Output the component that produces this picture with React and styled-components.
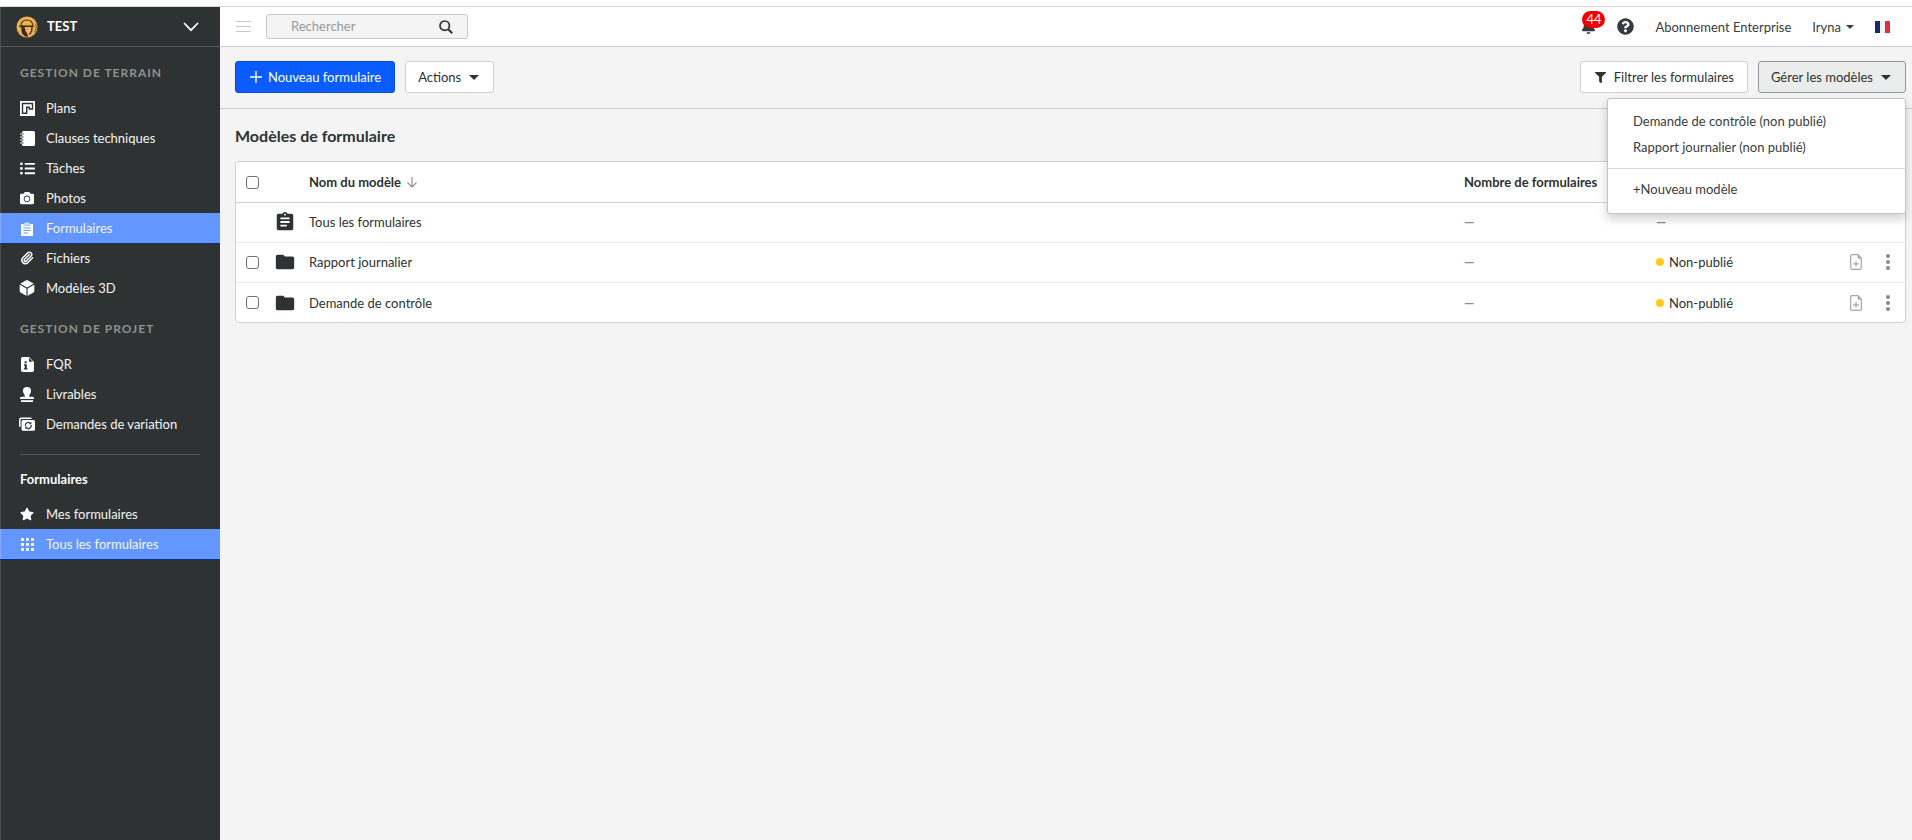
import React from "react";
import styled, { createGlobalStyle, css } from "styled-components";
import { FaCamera, FaListUl, FaStar, FaFilter, FaQuestionCircle, FaBell } from "react-icons/fa";
import { IoCube } from "react-icons/io5";
import { MdAssignment, MdFolder } from "react-icons/md";
import { Paperclip } from "lucide-react";

const GlobalStyle = createGlobalStyle`
  *, *::before, *::after { box-sizing: border-box; }
  body {
    margin: 0;
    background: #f4f4f4;
    color: #2e3232;
    font-family: Lato, "Open Sans", sans-serif;
    font-size: 13px;
    line-height: 20px;
  }
  button, input { font: inherit; color: inherit; }
  svg { display: block; flex: none; }
`;

const Page = styled.div`
  display: flex;
  flex-direction: column;
  min-height: 100vh;
`;

const TopStrip = styled.div`
  height: 7px;
  background: #fff;
  border-bottom: 1px solid #d6d6d6;
`;

const Shell = styled.div`
  display: flex;
  flex: 1;
`;

/* ---------- sidebar ---------- */

const Sidebar = styled.aside`
  flex: none;
  width: 220px;
  background: #2e3233;
  color: #fff;
  box-shadow: inset 1px 0 #4a4e4f;
`;

const ProjectButton = styled.button`
  display: flex;
  align-items: center;
  width: 100%;
  height: 40px;
  padding: 0 21px 0 16px;
  border: 0;
  border-bottom: 1px solid #565959;
  background: none;
  font-weight: 700;
  cursor: pointer;
`;

const ProjectName = styled.span`
  flex: 1;
  margin-left: 9px;
  padding-bottom: 2px;
  text-align: left;
`;

const SectionTitle = styled.h2`
  margin: 0;
  padding: 16px 20px 10px;
  font-size: 12px;
  font-weight: 700;
  letter-spacing: 1px;
  color: #8f9191;
  text-transform: uppercase;
`;

const GroupTitle = styled.h2`
  margin: 0;
  padding: 14px 20px 10px;
  font-size: 13px;
  font-weight: 700;
`;

const NavList = styled.ul`
  margin: 0;
  padding: 0;
  list-style: none;
`;

const NavLink = styled.a`
  display: flex;
  align-items: center;
  gap: 11px;
  height: 30px;
  padding: 0 19px;
  color: #f4f4f4;
  text-decoration: none;
  ${(p) =>
    p.$active &&
    css`
      background: #6496ff;
      box-shadow: inset 1px 0 #86adff, 0 1px #0b2f7c;
    `}
`;

const NavIcon = styled.span`
  display: flex;
  justify-content: center;
  width: 16px;
  color: #fff;
`;

const Divider = styled.hr`
  margin: 15px 20px 0;
  border: 0;
  border-top: 1px solid #565959;
`;

/* ---------- main column ---------- */

const Main = styled.div`
  display: flex;
  flex-direction: column;
  flex: 1;
  min-width: 0;
`;

const TopBar = styled.header`
  display: flex;
  align-items: center;
  justify-content: space-between;
  height: 40px;
  padding: 0 22px 0 16px;
  background: #fff;
  border-bottom: 1px solid #cdcdcd;
`;

const BarGroup = styled.div`
  display: flex;
  align-items: center;
  gap: ${(p) => p.$gap}px;
`;

const IconButton = styled.button`
  display: flex;
  align-items: center;
  justify-content: center;
  position: relative;
  padding: 0;
  border: 0;
  background: none;
  color: ${(p) => p.$color || "#343a42"};
  cursor: pointer;
`;

const SearchBox = styled.form`
  display: flex;
  align-items: center;
  width: 202px;
  height: 25px;
  padding: 0 14px 0 24px;
  border: 1px solid #c8c8c8;
  border-radius: 3px;
  background: #f4f4f4;
`;

const SearchInput = styled.input`
  flex: 1;
  min-width: 0;
  height: 20px;
  padding: 0 0 2px;
  border: 0;
  outline: 0;
  background: none;
  &::placeholder { color: #9a9a9a; opacity: 1; }
`;

const Badge = styled.span`
  position: absolute;
  top: -8px;
  left: 1px;
  min-width: 23px;
  border-radius: 9px;
  background: #f00000;
  color: #fff;
  font-size: 13px;
  line-height: 17px;
  text-align: center;
`;

const PlainLink = styled.a`
  color: #3a3d3d;
  text-decoration: none;
`;

const UserButton = styled.button`
  display: flex;
  align-items: center;
  gap: 5px;
  padding: 0;
  border: 0;
  background: none;
  color: #3a3d3d;
  cursor: pointer;
`;

const Toolbar = styled.div`
  display: flex;
  justify-content: space-between;
  padding: 14px 6px 15px 15px;
  border-bottom: 1px solid #cdcdd0;
`;

const variants = {
  primary: css`
    background: #0b5cff;
    border-color: #0a4bd0;
    color: #fff;
  `,
  plain: css`
    background: #fff;
    border-color: #cfcfcf;
  `,
  pressed: css`
    background: #ebedec;
    border-color: #92959a;
  `,
};

const Button = styled.button`
  display: flex;
  align-items: center;
  gap: ${(p) => p.$gap || 8}px;
  height: 32px;
  padding: ${(p) => (p.$menu ? "0 14px 0 12px" : "0 13px 0 14px")};
  border: 1px solid;
  border-radius: 3px;
  white-space: nowrap;
  cursor: pointer;
  ${(p) => variants[p.$variant || "plain"]}
`;

const MenuAnchor = styled.div`
  position: relative;
`;

const Menu = styled.div`
  position: absolute;
  z-index: 2;
  top: 37px;
  right: 0;
  width: 299px;
  padding: 9px 0 11px;
  border: 1px solid #c4c4c4;
  border-radius: 3px;
  background: #fff;
  box-shadow: 0 5px 10px rgba(0, 0, 0, 0.18);
`;

const MenuItem = styled.button`
  display: block;
  width: 100%;
  height: 26px;
  padding: 0 25px;
  border: 0;
  background: none;
  text-align: left;
  color: #3a3d3d;
  cursor: pointer;
`;

const MenuDivider = styled.hr`
  margin: 8px 0 7px;
  border: 0;
  border-top: 1px solid #d9d9d9;
`;

const Content = styled.main`
  padding: 15px 6px 0 15px;
`;

const Title = styled.h1`
  margin: 0 0 13px;
  font-size: 16px;
  line-height: 24px;
  font-weight: 700;
`;

const TableCard = styled.div`
  border: 1px solid #cfcfcf;
  border-radius: 4px;
  background: #fff;
  overflow: hidden;
`;

const Table = styled.table`
  width: 100%;
  border-collapse: separate;
  border-spacing: 0;
  table-layout: fixed;
`;

const Col = styled.col`
  width: ${(p) => (p.$w ? `${p.$w}px` : "auto")};
`;

const Th = styled.th`
  height: 41px;
  padding: 0;
  border-bottom: 1px solid #cfcfcf;
  text-align: left;
  font-weight: 700;
  white-space: nowrap;
`;

const Td = styled.td`
  height: 40px;
  padding: 0 0 1px;
  border-bottom: 1px solid #e9e9e9;
  white-space: nowrap;
  tr:last-child > & { height: 39px; padding: 0; border-bottom: 0; }
`;

const Inline = styled.span`
  display: flex;
  align-items: center;
  gap: ${(p) => p.$gap}px;
`;

const Checkbox = styled.input`
  display: block;
  appearance: none;
  width: 13px;
  height: 13px;
  margin: 0 0 0 10px;
  border: 1px solid #6f7171;
  border-radius: 3px;
  background: #fff;
  &:checked { background: #0b5cff; }
`;

const Dash = styled.span`
  color: #8c8e8e;
  font-weight: 700;
`;

const Dot = styled.span`
  width: 8px;
  height: 8px;
  border-radius: 50%;
  background: #fc1;
`;

/* ---------- icons ---------- */

const LogoIcon = () => (
  <svg width="22" height="22" viewBox="0 0 22 22">
    <circle cx="11" cy="11" r="10.5" fill="#eab253" />
    <path d="M5 9.500C5.200 6 7.800 4 11 4s5.600 2.200 5.800 5.500" fill="none" stroke="#4a3414" strokeWidth="1.200" />
    <path d="M2.500 10.300c1.500-1 3-1 4.800-.9h10.500v1.500H9L6.500 12z" fill="#3b2a12" />
    <path d="M9 11h6.300v3.300l-2 3.700-2.800-1.300z" fill="#edb873" />
    <path d="M5.300 11.300h3.400l.6 3.600 2 2.600.6 3.400c-3.200-.3-5.400-1.900-6.300-4.600z" fill="#3b2a12" />
    <path d="M15.800 11c.6 3-.4 5.500-2.600 7.500" fill="none" stroke="#3b2a12" strokeWidth="1.400" />
    <path d="M9.600 13.800l1.800-.8" stroke="#c8524a" strokeWidth="1" />
    <path d="M19.600 7.500c1.100 3.300.6 6.500-1.300 9" fill="none" stroke="#5a4018" strokeWidth=".8" />
  </svg>
);

const ChevronDown = () => (
  <svg width="16" height="10" viewBox="0 0 16 10" fill="none" stroke="#fff" strokeWidth="1.700">
    <path d="M1 1l7 7.200L15 1" />
  </svg>
);

const PlansIcon = () => (
  <svg width="15" height="15" viewBox="0 0 15 15" fill="none" stroke="#2e3233">
    <rect width="15" height="15" fill="#fff" stroke="none" />
    <path d="M2.500 13V2.500h10v5.500H9.800" strokeWidth="1.400" />
    <path d="M2.500 12.300h4.200V6.200h2.600v2.600" strokeWidth="1.400" />
  </svg>
);

const NotebookIcon = () => (
  <svg width="15" height="15" viewBox="0 0 15 15">
    <path d="M3.500 0h10A1.500 1.500 0 0 1 15 1.500v12a1.500 1.500 0 0 1-1.500 1.500h-10A1.500 1.500 0 0 1 2 13.500v-12A1.500 1.500 0 0 1 3.500 0z" fill="#fff" />
    <path d="M0 3h3.500M0 6h3.500M0 9h3.500M0 12h3.500" stroke="#2e3233" strokeWidth="2" />
    <path d="M.5 3h3.200M.5 6h3.200M.5 9h3.200M.5 12h3.200" stroke="#fff" strokeWidth="1.100" strokeLinecap="round" />
  </svg>
);

const ClipboardIcon = () => (
  <svg width="12" height="15" viewBox="0 0 12 15">
    <path d="M0 3h2.600v1.600h6.800V3H12v12H0z" fill="#fff" />
    <path d="M3 3.800V2.200h1.500a1.600 1.600 0 0 1 3 0H9v1.600z" fill="#dbe7ff" />
    <path d="M2.500 7h7M2.500 9.500h7M2.500 12h4.500" stroke="#6496ff" strokeWidth="1.100" />
  </svg>
);

const InfoFileIcon = () => (
  <svg width="13" height="15" viewBox="0 0 13 15">
    <path d="M1.800 0H8l5 5v8.200A1.800 1.800 0 0 1 11.200 15H1.800A1.800 1.800 0 0 1 0 13.200V1.800A1.800 1.800 0 0 1 1.800 0z" fill="#fff" />
    <path d="M8 1v3.800h3.800z" fill="#2e3233" />
    <path d="M3.600 4.200h2v2h-2zM3 7.300h2.800v4h.8v1.300H2.900v-1.300h.8V8.600H3z" fill="#2e3233" />
  </svg>
);

const StampIcon = () => (
  <svg width="14" height="15" viewBox="0 0 14 15" fill="#fff">
    <path d="M7 0a4.100 4.100 0 0 0-4.100 4.100c0 2.200 2 3.400 2 5.600H1.500A1.500 1.500 0 0 0 0 11.200V12h14v-.8a1.500 1.500 0 0 0-1.500-1.500H9.100c0-2.200 2-3.400 2-5.600A4.100 4.100 0 0 0 7 0z" />
    <path d="M1 13.200h12V15H1z" />
  </svg>
);

const VariationIcon = () => (
  <svg width="16" height="14" viewBox="0 0 16 14">
    <path d="M12.500 1.200H2.200A1.400 1.400 0 0 0 .8 2.600v7.200" fill="none" stroke="#fff" strokeWidth="1.500" />
    <rect x="2.500" y="3" width="13.500" height="10.700" rx="1.500" fill="#fff" />
    <path d="M6.300 8.700a3 3 0 0 1 5-2.500M12.300 8a3 3 0 0 1-5 2.700" fill="none" stroke="#2e3233" strokeWidth="1.200" />
    <path d="M12.400 4.800v2.400H10zM6.200 12V9.600h2.400z" fill="#2e3233" />
  </svg>
);

const GridIcon = () => (
  <svg width="13" height="13" viewBox="0 0 13 13" fill="#fff">
    {[0, 5, 10].map((y) => [0, 5, 10].map((x) => <rect key={`${x}-${y}`} x={x} y={y} width="3" height="3" rx=".8" />))}
  </svg>
);

const HamburgerIcon = () => (
  <svg width="15" height="12" viewBox="0 0 15 12" stroke="#c9c9c9">
    <path d="M0 .5h15M0 5.500h15M0 10.500h15" />
  </svg>
);

const SearchIcon = () => (
  <svg width="14" height="14" viewBox="0 0 14 14" fill="none" stroke="#2e3232" strokeWidth="1.700">
    <circle cx="5.700" cy="5.700" r="4.700" />
    <path d="M9.200 9.200l4 4" strokeWidth="2" />
  </svg>
);

const PlusIcon = () => (
  <svg width="12" height="12" viewBox="0 0 12 12" stroke="#fff" strokeWidth="1.400">
    <path d="M6 0v12M0 6h12" />
  </svg>
);

const Caret = ({ width = 10, height = 5 }) => (
  <svg width={width} height={height} viewBox="0 0 10 5" fill="currentColor" preserveAspectRatio="none">
    <path d="M0 0h10L5 5z" />
  </svg>
);

const FlagIcon = () => (
  <svg width="15" height="12" viewBox="0 0 15 12">
    <rect width="5" height="12" fill="#15296b" />
    <rect x="5" width="5" height="12" fill="#f2f2f4" />
    <rect x="10" width="5" height="12" fill="#d8323c" />
  </svg>
);

const ArrowDown = () => (
  <svg width="10" height="11" viewBox="0 0 10 11" fill="none" stroke="#8f9292" strokeWidth="1.200">
    <path d="M5 0v10M.5 5.500L5 10l4.500-4.500" />
  </svg>
);

const AddFileIcon = () => (
  <svg width="12" height="16" viewBox="0 0 12 16" fill="none" stroke="#a3a5a5" strokeWidth="1.200">
    <path d="M2 .7h6l3.300 3.500v9.700A1.300 1.300 0 0 1 10 15.300H2A1.300 1.300 0 0 1 .7 13.900V2A1.300 1.300 0 0 1 2 .7zM6 7v5.600M3.200 9.800h5.600" />
    <path d="M7.700.8v3.700h3.500z" fill="#a3a5a5" stroke="none" />
  </svg>
);

const DotsIcon = () => (
  <svg width="4" height="16" viewBox="0 0 4 16" fill="#858888">
    <circle cx="2" cy="2" r="2" />
    <circle cx="2" cy="8" r="2" />
    <circle cx="2" cy="14" r="2" />
  </svg>
);

/* ---------- data ---------- */

const fieldItems = [
  { label: "Plans", icon: <PlansIcon /> },
  { label: "Clauses techniques", icon: <NotebookIcon /> },
  { label: "Tâches", icon: <FaListUl size={15} /> },
  { label: "Photos", icon: <FaCamera size={14} /> },
  { label: "Formulaires", icon: <ClipboardIcon />, active: true },
  { label: "Fichiers", icon: <Paperclip size={14} strokeWidth={2.5} /> },
  { label: "Modèles 3D", icon: <IoCube size={18} /> },
];

const projectItems = [
  { label: "FQR", icon: <InfoFileIcon /> },
  { label: "Livrables", icon: <StampIcon /> },
  { label: "Demandes de variation", icon: <VariationIcon /> },
];

const formItems = [
  { label: "Mes formulaires", icon: <FaStar size={14} /> },
  { label: "Tous les formulaires", icon: <GridIcon />, active: true },
];

const templates = ["Rapport journalier", "Demande de contrôle"];

const Nav = ({ items }) => (
  <NavList>
    {items.map((item) => (
      <li key={item.label}>
        <NavLink href="#" $active={item.active}>
          <NavIcon>{item.icon}</NavIcon>
          {item.label}
        </NavLink>
      </li>
    ))}
  </NavList>
);

export default function App() {
  return (
    <Page>
      <GlobalStyle />
      <TopStrip />
      <Shell>
        <Sidebar>
          <ProjectButton>
            <LogoIcon />
            <ProjectName>TEST</ProjectName>
            <ChevronDown />
          </ProjectButton>
          <nav>
            <SectionTitle>Gestion de terrain</SectionTitle>
            <Nav items={fieldItems} />
            <SectionTitle>Gestion de projet</SectionTitle>
            <Nav items={projectItems} />
            <Divider />
            <GroupTitle>Formulaires</GroupTitle>
            <Nav items={formItems} />
          </nav>
        </Sidebar>

        <Main>
          <TopBar>
            <BarGroup $gap={15}>
              <IconButton aria-label="Menu">
                <HamburgerIcon />
              </IconButton>
              <SearchBox>
                <SearchInput type="text" aria-label="Rechercher" placeholder="Rechercher" />
                <IconButton type="submit" aria-label="Lancer la recherche">
                  <SearchIcon />
                </IconButton>
              </SearchBox>
            </BarGroup>
            <BarGroup $gap={21}>
              <IconButton aria-label="Notifications">
                <FaBell size={15} />
                <Badge>44</Badge>
              </IconButton>
              <IconButton aria-label="Aide">
                <FaQuestionCircle size={17} />
              </IconButton>
              <PlainLink href="#">Abonnement Enterprise</PlainLink>
              <UserButton>
                Iryna <Caret width={8} height={4} />
              </UserButton>
              <IconButton aria-label="Langue">
                <FlagIcon />
              </IconButton>
            </BarGroup>
          </TopBar>

          <Toolbar>
            <BarGroup $gap={10}>
              <Button $variant="primary" $gap={6}>
                <PlusIcon />
                Nouveau formulaire
              </Button>
              <Button $menu>
                Actions <Caret />
              </Button>
            </BarGroup>
            <BarGroup $gap={10}>
              <Button>
                <FaFilter size={11} />
                Filtrer les formulaires
              </Button>
              <MenuAnchor>
                <Button $variant="pressed" $menu aria-expanded="true">
                  Gérer les modèles <Caret />
                </Button>
                <Menu>
                  <MenuItem>Demande de contrôle (non publié)</MenuItem>
                  <MenuItem>Rapport journalier (non publié)</MenuItem>
                  <MenuDivider />
                  <MenuItem>+Nouveau modèle</MenuItem>
                </Menu>
              </MenuAnchor>
            </BarGroup>
          </Toolbar>

          <Content>
            <Title>Modèles de formulaire</Title>
            <TableCard>
              <Table>
                <colgroup>
                  <Col $w={38} />
                  <Col $w={35} />
                  <Col />
                  <Col $w={192} />
                  <Col $w={194} />
                  <Col $w={36} />
                  <Col $w={19} />
                </colgroup>
                <thead>
                  <tr>
                    <Th>
                      <Checkbox type="checkbox" aria-label="Tout sélectionner" />
                    </Th>
                    <Th />
                    <Th>
                      <Inline $gap={6}>
                        Nom du modèle <ArrowDown />
                      </Inline>
                    </Th>
                    <Th>Nombre de formulaires</Th>
                    <Th />
                    <Th />
                    <Th />
                  </tr>
                </thead>
                <tbody>
                  <tr>
                    <Td />
                    <Td>
                      <MdAssignment size={22} />
                    </Td>
                    <Td>Tous les formulaires</Td>
                    <Td>
                      <Dash>—</Dash>
                    </Td>
                    <Td>
                      <Dash>—</Dash>
                    </Td>
                    <Td />
                    <Td />
                  </tr>
                  {templates.map((name) => (
                    <tr key={name}>
                      <Td>
                        <Checkbox type="checkbox" aria-label={name} />
                      </Td>
                      <Td>
                        <MdFolder size={22} />
                      </Td>
                      <Td>{name}</Td>
                      <Td>
                        <Dash>—</Dash>
                      </Td>
                      <Td>
                        <Inline $gap={5}>
                          <Dot />
                          Non-publié
                        </Inline>
                      </Td>
                      <Td>
                        <IconButton aria-label="Ajouter un formulaire">
                          <AddFileIcon />
                        </IconButton>
                      </Td>
                      <Td>
                        <IconButton aria-label="Plus d’options">
                          <DotsIcon />
                        </IconButton>
                      </Td>
                    </tr>
                  ))}
                </tbody>
              </Table>
            </TableCard>
          </Content>
        </Main>
      </Shell>
    </Page>
  );
}
